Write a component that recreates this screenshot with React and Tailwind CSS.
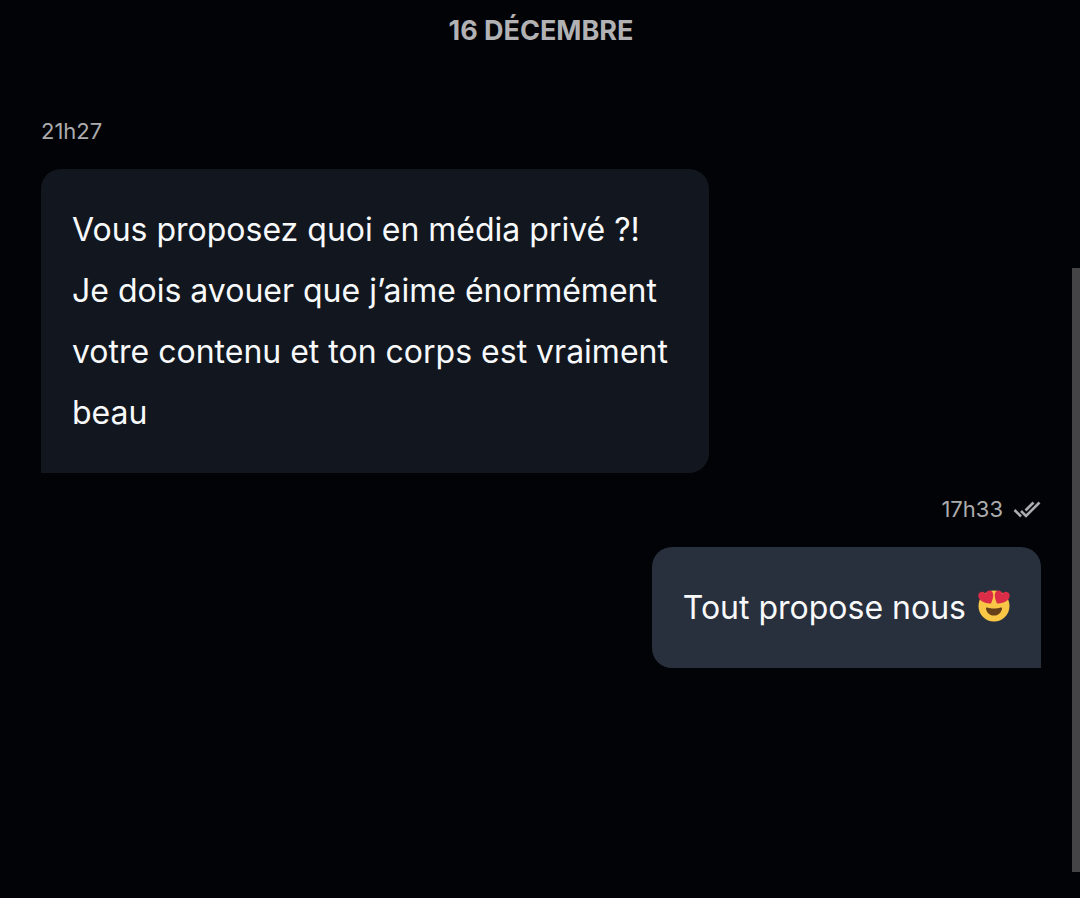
const messages = [
  {
    id: 1,
    time: "21h27",
    mine: false,
    lines: [
      "Vous proposez quoi en média privé ?!",
      "Je dois avouer que j’aime énormément votre contenu et ton corps est vraiment beau",
    ],
  },
  { id: 2, time: "17h33", mine: true, lines: ["Tout propose nous"] },
];

function ReadIcon() {
  return (
    <svg
      className="h-[18px] w-7"
      viewBox="0 0 28 18"
      fill="none"
      stroke="currentColor"
      strokeWidth="2.6"
      role="img"
      aria-label="Lu"
    >
      <path d="M8 11l5 5L26.5 2.5" />
      <path d="M1.5 10l6.5 6.5" />
      <path d="M12.5 10.5l8-8" />
    </svg>
  );
}

function HeartEyes() {
  return (
    <svg
      className="ml-[3px] inline-block h-8 w-8 align-[-3px]"
      viewBox="0 0 32 32"
      role="img"
      aria-label="Yeux en cœur"
    >
      <circle cx="16" cy="16" r="15.5" fill="#f9c646" />
      <path
        d="M13 13.4C9.4 13.6 4.2 12.4 1.6 9.2C-.6 6.4 0 2.8 3 2C5 1.4 6.6 2.4 7.4 4C8.2 1.4 10.4 0 12.8 .8C16.6 2.4 15.4 8.6 13 13.4Z"
        fill="#dc2d48"
      />
      <path
        d="M19 13.4C22.6 13.6 27.8 12.4 30.4 9.2C32.6 6.4 32 2.8 29 2C27 1.4 25.4 2.4 24.6 4C23.8 1.4 21.6 0 19.2 .8C15.4 2.4 16.6 8.6 19 13.4Z"
        fill="#dc2d48"
      />
      <path
        d="M9.5 17.5C13 18.9 19 18.9 22.5 17.5C23.7 17.1 24.3 17.9 24 19C22.9 23.2 20.2 25.6 16 25.6S9.1 23.2 8 19C7.7 17.9 8.3 17.1 9.5 17.5Z"
        fill="#664018"
      />
    </svg>
  );
}

function Message({ time, mine, lines }) {
  return (
    <li className={mine ? "flex flex-col items-end" : "flex flex-col items-start"}>
      <div className="flex items-center gap-2.5 text-[22px] leading-8 text-[#acacae]">
        <time>{time}</time>
        {mine && <ReadIcon />}
      </div>
      <div
        className={
          mine
            ? "mt-[22px] max-w-full rounded-[20px] rounded-br-none bg-[#28303d] px-[31px] py-[30px]"
            : "mt-[22px] w-[668px] max-w-full rounded-[20px] rounded-bl-none bg-[#12171f] px-[31px] py-[30px]"
        }
      >
        <div className="text-[32px] leading-[61px] text-[#f8f9fb]">
          {lines.map((line) => (
            <p key={line}>
              {line}
              {mine && <> <HeartEyes /></>}
            </p>
          ))}
        </div>
      </div>
    </li>
  );
}

export default function App() {
  return (
    <main className="relative min-h-screen bg-[#020307] pt-2 pr-[39px] pl-[41px] font-['Inter',sans-serif]">
      <h2 className="text-center text-[27px] leading-[45px] font-bold text-[#b2b2b4] uppercase">
        16 décembre
      </h2>
      <ol className="mt-[62px] flex flex-col gap-5">
        {messages.map((message) => (
          <Message key={message.id} {...message} />
        ))}
      </ol>
      <div className="absolute top-[268px] right-0 h-[604px] w-2 bg-[#444446]" />
    </main>
  );
}
